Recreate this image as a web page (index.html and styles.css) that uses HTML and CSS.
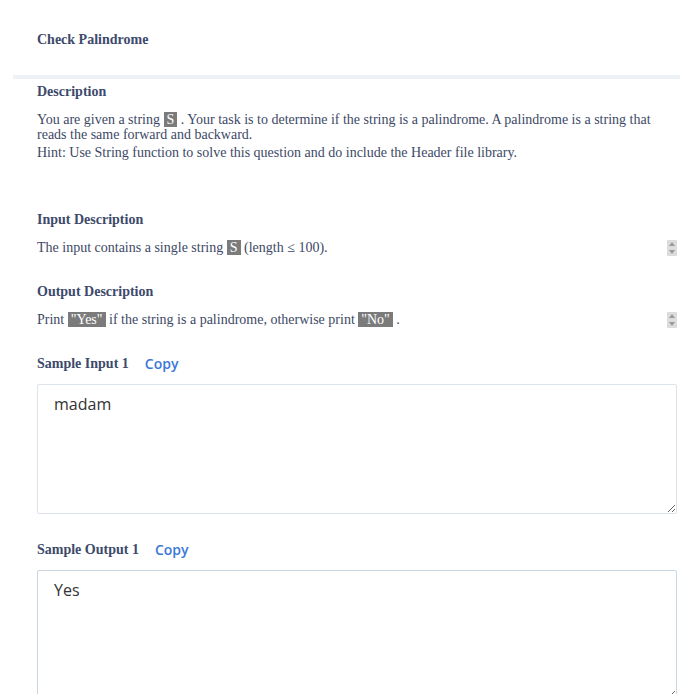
FILE: index.html
```html
<!DOCTYPE html>
<html>
<head>
<meta charset="utf-8">
<link rel="stylesheet" href="styles.css">
</head>
<body>
<div class="page">
  <header class="head">
    <h1 class="title">Check Palindrome</h1>
  </header>
  <div class="sep"></div>
  <main class="content">
    <section class="block desc">
      <h2 class="h">Description</h2>
      <p class="para">You are given a string <code class="code">S</code> . Your task is to determine if the string is a palindrome. A palindrome is a string that reads the same forward and backward.</p>
      <p class="hint">Hint: Use String function to solve this question and do include the Header file library.</p>
    </section>
    <section class="block io in">
      <h2 class="h">Input Description</h2>
      <div class="row">
        <p class="line">The input contains a single string <code class="code">S</code> (length ≤ 100).</p>
        <div class="spin"><span class="up"></span><span class="down"></span></div>
      </div>
    </section>
    <section class="block io out">
      <h2 class="h">Output Description</h2>
      <div class="row">
        <p class="line">Print <code class="code">"Yes"</code> if the string is a palindrome, otherwise print <code class="code">"No"</code> .</p>
        <div class="spin"><span class="up"></span><span class="down"></span></div>
      </div>
    </section>
    <section class="block sample s1">
      <div class="shead"><h2 class="h">Sample Input 1</h2><span class="copy">Copy</span></div>
      <textarea class="box" readonly>madam</textarea>
    </section>
    <section class="block sample s2">
      <div class="shead"><h2 class="h">Sample Output 1</h2><span class="copy">Copy</span></div>
      <textarea class="box box2" readonly>Yes</textarea>
    </section>
  </main>
</div>
</body>
</html>
```
FILE: styles.css
```css
html, body { margin: 0; padding: 0; background: #fff; }
body { font-family: "Liberation Serif", serif; color: #3d4866; overflow: hidden; }
.page { width: 680px; }
.head { height: 75px; padding-left: 37px; box-sizing: border-box; padding-top: 32px; }
.title { margin: 0; font-size: 14px; line-height: 16px; font-weight: bold; color: #3d4a6b; }
.sep { margin-left: 13px; height: 4px; background: #eef1f5; }
.content { padding-left: 37px; padding-right: 3px; }
.h { margin: 0; font-size: 14px; line-height: 16px; font-weight: bold; color: #3d4a6b; }
.desc { padding-top: 5px; }
.para { margin: 12px 0 0; font-size: 14px; line-height: 15px; color: #3d4866; }
.hint { margin: 3px 0 0; font-size: 14px; line-height: 15px; color: #3d4866; }
.code { font-family: "Liberation Serif", serif; font-weight: normal; background: #7b7b7b; color: #fff; padding: 0 3px; font-size: 14px; }
.in { margin-top: 52px; }
.out { margin-top: 28px; }
.row { display: flex; align-items: center; justify-content: space-between; margin-top: 12px; }
.line { margin: 0; font-size: 14px; line-height: 16px; }
.spin { width: 10px; height: 16px; background: #dcdcdc; display: flex; flex-direction: column; align-items: center; justify-content: space-around; }
.up { width: 0; height: 0; border-left: 3px solid transparent; border-right: 3px solid transparent; border-bottom: 4px solid #9b9b9b; }
.down { width: 0; height: 0; border-left: 3px solid transparent; border-right: 3px solid transparent; border-top: 4px solid #9b9b9b; }
.s1 { margin-top: 28px; }
.s2 { margin-top: 28px; }
.shead { display: flex; align-items: center; gap: 16px; height: 16px; }
.copy { font-family: "Open Sans", sans-serif; font-weight: 600; font-size: 14px; color: #3a78d8; line-height: 16px; }
.box { display: block; box-sizing: border-box; width: 640px; height: 130px; margin-top: 12px; border: 1px solid #dde3ea; border-radius: 2px; padding: 8px 16px; font-family: "Open Sans", sans-serif; font-size: 16px; line-height: 22px; color: #333; resize: vertical; outline: none; background: #fff; }
.box2 { border-color: #c9d5e3; }
```
